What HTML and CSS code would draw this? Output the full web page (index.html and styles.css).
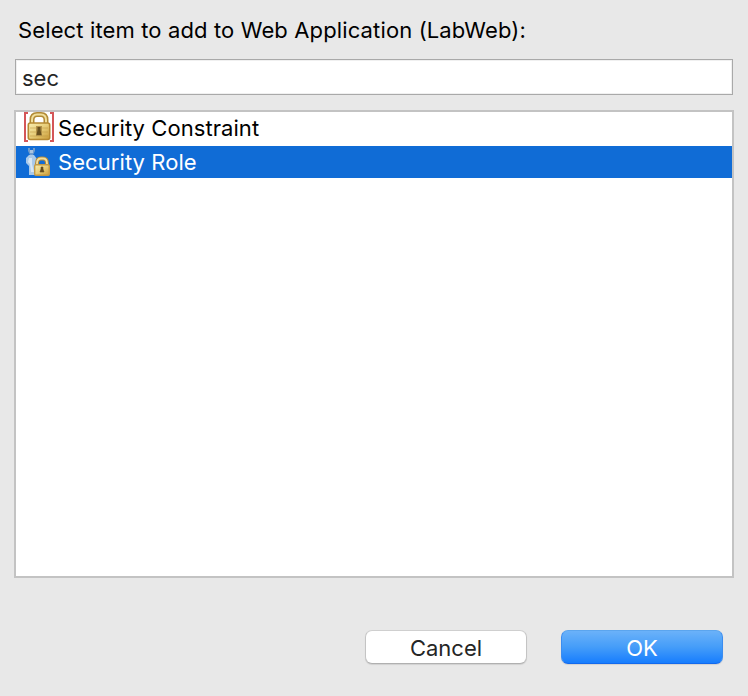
FILE: index.html
```html
<!DOCTYPE html>
<html lang="en">
<head>
<meta charset="utf-8">
<title>Add item</title>
<link rel="stylesheet" href="styles.css">
</head>
<body>
<main class="dialog">
  <label class="prompt" for="filter">Select item to add to Web Application (LabWeb):</label>
  <input class="filter" id="filter" type="text" value="sec">
  <ul class="list">
    <li class="item item-first">
      <svg class="icon" viewBox="0 0 32 32" width="32" height="32">
        <defs>
          <linearGradient id="gold" x1="0" y1="0" x2="1" y2="1">
            <stop offset="0" stop-color="#f9efb0"/>
            <stop offset=".5" stop-color="#e7cd79"/>
            <stop offset="1" stop-color="#c99a36"/>
          </linearGradient>
        </defs>
        <path d="M5 2H2V30H5M27 2H30V30H27" fill="none" stroke="#d45658" stroke-width="2"/>
        <path d="M9 13V9Q9 3.5 14 3.5H18Q23 3.5 23 9V13" fill="none" stroke="#b28a35" stroke-width="5"/>
        <path d="M9 13V9Q9 3.5 14 3.5H18Q23 3.5 23 9V13" fill="none" stroke="#f0df9c" stroke-width="2"/>
        <rect x="5.3" y="12" width="21.4" height="16.5" rx="2" fill="url(#gold)" stroke="#b58932" stroke-width="1.6"/>
        <path d="M7 17H25M7 21H25M7 25H25" stroke="#bd963e" stroke-opacity=".55" stroke-width="1"/>
        <rect x="13" y="15" width="6" height="10" fill="#b39249"/>
        <path d="M14.5 16H17.5V19L18.5 24H13.5L14.5 19Z" fill="#67501f"/>
      </svg>
      <span>Security Constraint</span>
    </li>
    <li class="item item-selected">
      <svg class="icon" viewBox="0 0 32 32" width="32" height="32">
        <path d="M5 2H7V4H10V2H12V5L10 9H7L5 5Z" fill="#6f9bcc"/>
        <path d="M7 4H10V7H7Z" fill="#a9c4e0"/>
        <path d="M6 9H11L14 13V25L12 29H6V20L3 17V12Z" fill="#a9c9e9"/>
        <path d="M6 12H9V18L11 26H8L7 18L5 16Z" fill="#d7e6f3"/>
        <path d="M14 19V17.5Q14 12.5 18 12.5H20Q24 12.5 24 17.5V19" fill="none" stroke="#b18a3c" stroke-width="4"/>
        <path d="M14 19V17.5Q14 12.5 18 12.5H20Q24 12.5 24 17.5V19" fill="none" stroke="#f2dfa0" stroke-width="1.8"/>
        <rect x="11.7" y="18.7" width="14.6" height="10.6" rx="1.2" fill="url(#gold)" stroke="#c29a45" stroke-width="1.4"/>
        <path d="M18 21H20V23L21 26H17L18 23Z" fill="#654d1d" stroke="#654d1d" stroke-width=".6"/>
      </svg>
      <span>Security Role</span>
    </li>
  </ul>
  <div class="buttons">
    <button class="button" type="button">Cancel</button>
    <button class="button button-default" type="button">OK</button>
  </div>
</main>
</body>
</html>
```

FILE: styles.css
```css
* { box-sizing: border-box; }
body {
  margin: 0;
  background: #e8e8e8;
  color: #000;
  font: 22px/32px Inter, sans-serif;
}
.dialog {
  display: flex;
  flex-direction: column;
  width: 748px;
  height: 696px;
  padding: 14px 14px 32px;
}
.prompt {
  height: 45px;
  padding-left: 4px;
  white-space: nowrap;
  letter-spacing: 0.13px;
}
.filter {
  height: 36px;
  margin: 0 1px 15px;
  padding: 2px 6px 0;
  border: 1px solid #a9a9a9;
  border-radius: 0;
  outline: 0;
  background: #fff;
  box-shadow: inset 0 0 0 1px #f0f0f0;
  color: #252525;
  font: inherit;
}
.list {
  height: 468px;
  margin: 0 0 52px;
  padding: 0;
  border: 2px solid #c3c3c3;
  background: #fff;
  list-style: none;
}
.item {
  display: flex;
  height: 32px;
  padding-left: 7px;
  gap: 3px;
  white-space: nowrap;
  letter-spacing: 0.07px;
}
.item-first { height: 34px; }
.item-first .icon { margin-top: -1px; }
.item-selected { background: #106cd6; color: #fff; }
.icon { flex: none; }
.buttons {
  display: flex;
  justify-content: flex-end;
  gap: 34px;
  padding-right: 11px;
}
.button {
  width: 162px;
  height: 34px;
  padding: 1px 0 0;
  border: 1px solid;
  border-color: #cfcfcf #c4c4c4 #b0b0b0;
  border-radius: 7px;
  background: #fff;
  box-shadow: 0 1px 1px rgba(0, 0, 0, .1);
  color: #252525;
  font: inherit;
}
.button-default {
  border-color: #5ba5ee #3b8df0 #1269ed;
  background: linear-gradient(#6db3f9, #459df9 50%, #147bfe);
  background-origin: border-box;
  color: #fff;
}
```
